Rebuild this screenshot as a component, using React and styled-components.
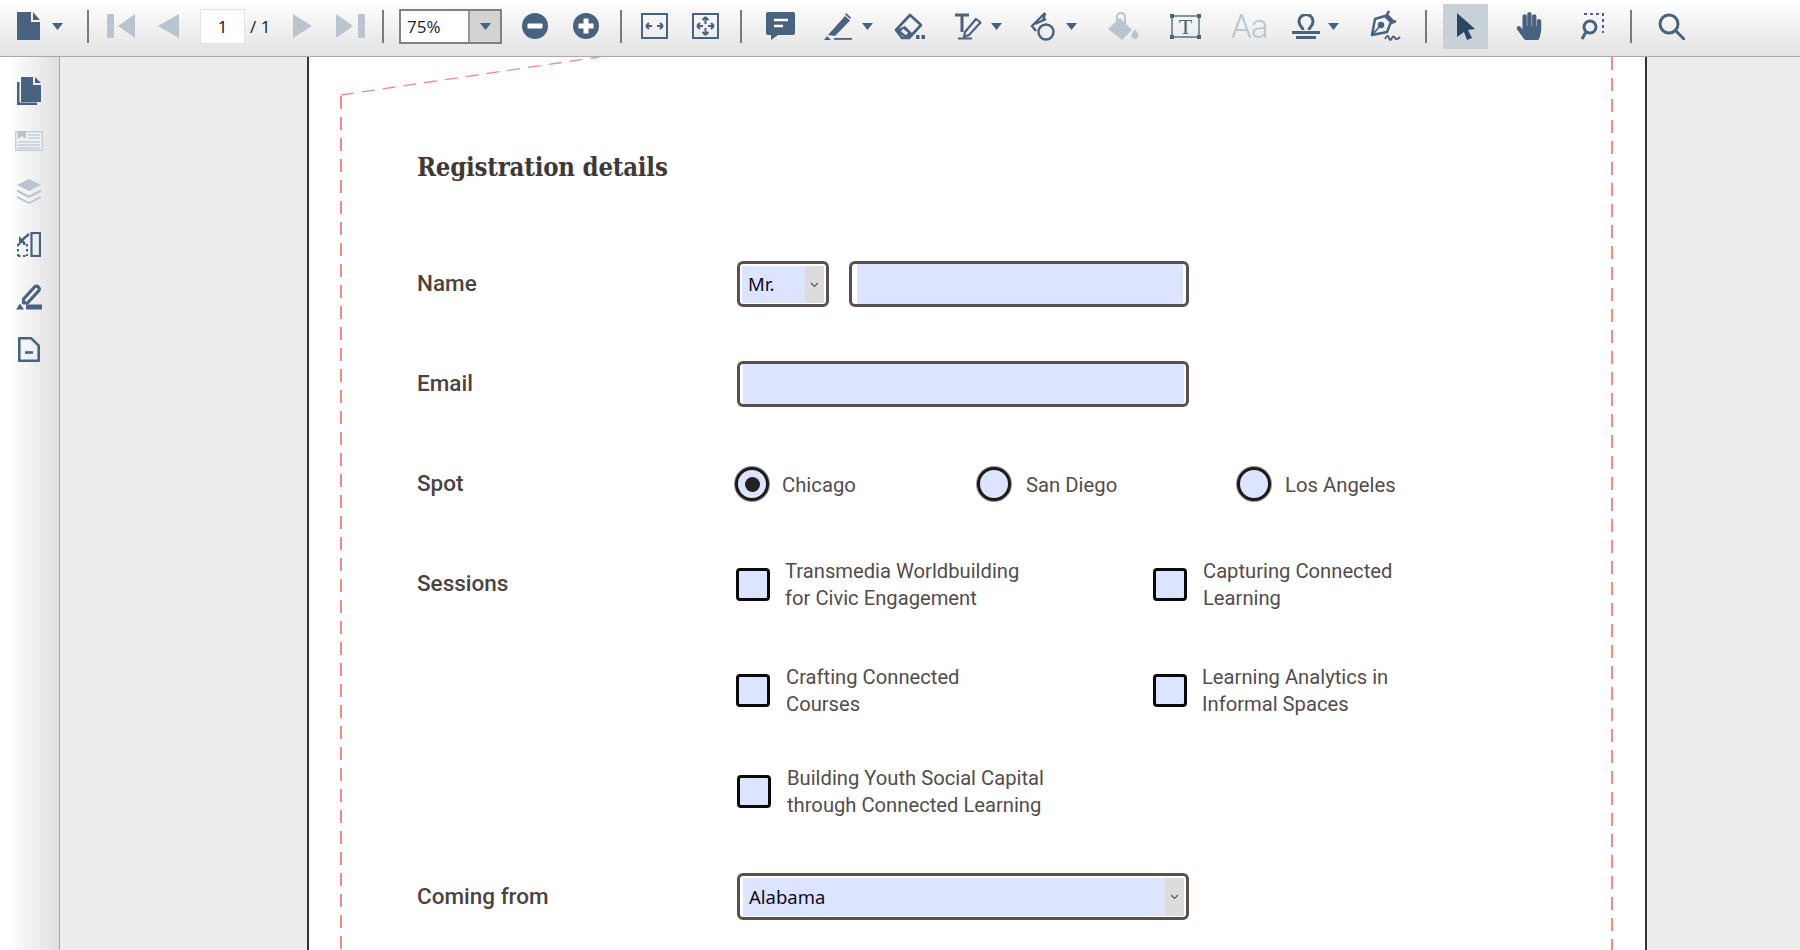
import React from "react";
import styled, { createGlobalStyle } from "styled-components";
import { FaHandPaper } from "react-icons/fa";

const Global = createGlobalStyle`
  html, body { margin: 0; padding: 0; height: 100%; overflow: hidden; background: #ededed; }
  #root { height: 100%; }
  * { box-sizing: border-box; }
`;

const BLUE = "#48627f";
const DIM = "#b9c4ce";
const FILL = "#dce4ff";

const Shell = styled.div`
  display: flex; flex-direction: column; width: 1800px; height: 950px; overflow: hidden;
  font-family: Roboto, sans-serif;
`;
const Toolbar = styled.header`
  height: 57px; flex: none; display: flex; align-items: center; padding-bottom: 4px;
  background: linear-gradient(#ffffff, #e3e3e3);
  border-bottom: 1px solid #a9a9a9;
`;
const Slot = styled.div`
  flex: none; display: flex; align-items: center; justify-content: center;
  margin-left: ${p => p.$gap}px;
  color: ${p => (p.$dim ? DIM : BLUE)};
  svg { display: block; }
`;
const Sep = styled.div`
  flex: none; width: 2px; height: 33px; background: #7b7b7b; margin-left: ${p => p.$gap}px;
`;
const PageInput = styled.div`
  flex: none; width: 45px; height: 35px; margin-left: ${p => p.$gap}px;
  background: #fff; border: 1px solid #e2e2e2;
  display: flex; align-items: center; justify-content: center;
  font: 17px "Open Sans", sans-serif; color: #111;
`;
const PageTotal = styled.span`
  flex: none; width: 21px; margin-left: ${p => p.$gap}px; white-space: nowrap;
  font: 17px "Open Sans", sans-serif; color: #222;
`;
const ZoomSelect = styled.div`
  flex: none; width: 103px; height: 35px; margin-left: ${p => p.$gap}px;
  display: flex; background: #fff; border: 2px solid #808080;
`;
const ZoomValue = styled.div`
  flex: 1; padding-left: 6px; display: flex; align-items: center;
  font: 17px "Open Sans", sans-serif; color: #222;
`;
const ZoomCaret = styled.div`
  width: 32px; background: #d3d3d3; border-left: 2px solid #999;
  display: flex; align-items: center; justify-content: center; color: ${BLUE};
`;
const Active = styled.div`
  flex: none; width: 45px; height: 45px; margin-left: ${p => p.$gap}px;
  background: #c8d1d7; display: flex; align-items: center; justify-content: center;
`;
const FontGlyph = styled.span`
  flex: none; margin-left: ${p => p.$gap}px; width: 34px; white-space: nowrap;
  font: 300 33px Roboto, sans-serif; color: #b9c4ce; letter-spacing: -1px;
`;

const Body = styled.div`
  flex: 1; display: flex; min-height: 0;
`;
const Sidebar = styled.aside`
  width: 60px; flex: none; display: flex; flex-direction: column; align-items: center;
  padding: 27px 0 0 0;
  background: linear-gradient(90deg, #ffffff 15%, #dfdfdf);
  border-right: 1px solid #a6a6a6;
  color: ${BLUE};
`;
const SideIcon = styled.div`
  height: ${p => p.$h}px; margin-top: ${p => p.$gap}px; margin-left: -1px;
  color: ${p => (p.$dim ? DIM : BLUE)};
  svg { display: block; }
`;
const Viewer = styled.main`
  flex: 1; background: #ededed; display: flex; padding-left: 247px; overflow: hidden;
`;
const Page = styled.section`
  position: relative; width: 1340px; height: 100%; flex: none; background: #fff;
  border-left: 2px solid #333; border-right: 2px solid #333;
  padding: 94px 0 0 108px; color: #4b4343;
`;
const CutLines = styled.svg`
  position: absolute; left: 0; top: 0; width: 100%; height: 100%; pointer-events: none;
`;
const Title = styled.h1`
  margin: 0; font: 700 25.5px/32px "DejaVu Serif Condensed", "DejaVu Serif", serif; color: #3f3838;
  letter-spacing: -0.2px;
`;
const Row = styled.div`
  display: flex; align-items: ${p => p.$top ? "flex-start" : "center"}; margin-top: ${p => p.$mt}px;
`;
const Label = styled.div`
  width: 320px; flex: none; margin-bottom: 2px;
  font: 500 22.5px/${p => (p.$lh || 46) - 2}px Roboto, sans-serif; color: #4b4343;
`;
const Field = styled.div`
  width: ${p => p.$w}px; height: 46px; flex: none; margin-left: ${p => p.$ml || 0}px;
  background: #fff; border: 3px solid #5a4f4d; border-radius: 6px;
  padding: 0 ${p => p.$pr}px 0 ${p => p.$pl}px;
  display: flex;
`;
const FieldFill = styled.div`
  flex: 1; background: ${FILL};
`;
const SelectBox = styled.div`
  width: ${p => p.$w}px; height: ${p => p.$h}px; flex: none;
  background: #fff; border: 3px solid #5a4f4d; border-radius: 6px;
  padding: 2px 2px 1px ${p => p.$pl}px; display: flex;
`;
const SelectFill = styled.div`
  flex: 1; background: ${FILL}; display: flex; align-items: center; justify-content: space-between;
  font: 18.5px "Noto Sans", sans-serif; color: #0b0b1a; padding-left: 6px;
`;
const SelectText = styled.span` margin-top: -2px; `;
const SelectArrow = styled.div`
  width: 19px; height: 100%; background: #dcdcdc; display: flex; align-items: center; justify-content: center;
  color: #555;
`;
const Radios = styled.div` display: flex; margin-left: -2px; `;
const RadioItem = styled.label`
  display: flex; align-items: center; width: ${p => p.$w}px; height: 34px;
  font: 400 20.3px Roboto, sans-serif; color: #544c4c;
`;
const RadioText = styled.span` padding-top: 2px; `;
const RadioMark = styled.span`
  width: 34px; height: 34px; flex: none; margin-right: ${p => p.$mr}px; border-radius: 50%;
  background: ${FILL}; border: 3.5px solid #1d1a1a; box-shadow: 0 0 0 1px #9a9494;
  display: flex; align-items: center; justify-content: center;
  &::after { content: ""; display: ${p => (p.$on ? "block" : "none")};
    width: 15px; height: 15px; border-radius: 50%; background: #222; }
`;
const Sessions = styled.div`
  display: flex; flex-direction: column; margin-left: -1px;
`;
const SessionRow = styled.div`
  display: flex; margin-top: ${p => p.$mt || 0}px;
`;
const Session = styled.label`
  display: flex; align-items: center; width: 417px; height: 54px; padding-left: ${p => p.$pad || 0}px;
  font: 400 20.2px/27px Roboto, sans-serif; color: #544c4c;
`;
const SessionText = styled.span` padding-top: 2px; `;
const Check = styled.span`
  width: 34px; height: 33px; flex: none; margin-right: ${p => p.$mr}px;
  background: ${FILL}; border: 3.5px solid #0a0a0a; border-radius: 4px;
`;

const Caret = () => <svg width="11" height="7" viewBox="0 0 11 7"><path d="M0 0h11L5.5 7z" fill="currentColor" /></svg>;
const Chevron = () => <svg width="9" height="6" viewBox="0 0 9 6"><path d="M1 1l3.5 3.5L8 1" fill="none" stroke="currentColor" strokeWidth="1.2" /></svg>;

const i = { FileIcon: <svg width="23" height="28" viewBox="0 0 23 28" fill="currentColor"><path d="M0 0h14v10h9v18H0z" /><path d="M16 0l7 8h-7z" /></svg>,
  First: <svg width="28" height="24" viewBox="0 0 28 24" fill="currentColor"><rect width="7" height="24" /><path d="M28 0v24L11 12z" /></svg>,
  Prev: <svg width="21" height="24" viewBox="0 0 21 24" fill="currentColor"><path d="M21 0v24L0 12z" /></svg>,
  Next: <svg width="19" height="24" viewBox="0 0 19 24" fill="currentColor"><path d="M0 0v24l19-12z" /></svg>,
  Last: <svg width="29" height="24" viewBox="0 0 29 24" fill="currentColor"><path d="M0 0v24l17-12z" /><rect x="22" width="7" height="24" /></svg>,
  Minus: <svg width="26" height="26" viewBox="0 0 26 26"><circle cx="13" cy="13" r="13" fill="currentColor" /><rect x="5.500" y="10.500" width="15" height="5" rx="1" fill="#fff" /></svg>,
  Plus: <svg width="26" height="26" viewBox="0 0 26 26"><circle cx="13" cy="13" r="13" fill="currentColor" /><path d="M10.500 5.500h5v5h5v5h-5v5h-5v-5h-5v-5h5z" fill="#fff" /></svg>,
  FitW: <svg width="27" height="26" viewBox="0 0 27 26" fill="none" stroke="currentColor" strokeWidth="2"><rect x="1" y="1" width="25" height="24" /><path d="M5 13h6M5 13l3-3M5 13l3 3M22 13h-6M22 13l-3-3M22 13l-3 3" /></svg>,
  FitP: <svg width="27" height="26" viewBox="0 0 27 26" fill="none" stroke="currentColor" strokeWidth="2"><rect x="1" y="1" width="25" height="24" /><path d="M13.500 4v7M13.500 15v7M13.500 4L10.500 7M13.500 4l3 3M13.500 22l-3-3M13.500 22l3-3M5 13h6M16 13h6M5 13l3-3M5 13l3 3M22 13l-3-3M22 13l-3 3" /></svg>,
  Comment: <svg width="29" height="28" viewBox="0 0 29 28"><path d="M2 0h25a2 2 0 0 1 2 2v19a2 2 0 0 1-2 2H12l-7 5v-5H2a2 2 0 0 1-2-2V2a2 2 0 0 1 2-2z" fill="currentColor" /><path d="M8 8h14M8 14h9" stroke="#fff" strokeWidth="2.4" /></svg>,
  Highlight: <svg width="28" height="27" viewBox="0 0 28 27" fill="currentColor"><path d="M21 3l5 4.500L11 23l-7-1z" /><path d="M22 0l5 4.500-1 1.500-5-4.500z" /><path d="M0 27l3-4 4 4z" /><rect x="10" y="25" width="18" height="1.800" /></svg>,
  Eraser: <svg width="32" height="27" viewBox="0 0 32 27" fill="none" stroke="currentColor" strokeWidth="2.600" strokeLinejoin="round"><path d="M16 2L27 12 15 25H8L2 17z" /><path d="M2 17l9 8h4l4-4-8-8z" fill="currentColor" stroke="none" /><path d="M8 17l5 4" stroke="#eee" strokeWidth="3.500" /><rect x="22" y="22" width="3.500" height="4" fill="currentColor" stroke="none" /><rect x="27.500" y="22" width="3.500" height="4" fill="currentColor" stroke="none" /></svg>,
  FreeText: <svg width="28" height="27" viewBox="0 0 28 27" fill="none" stroke="currentColor"><path d="M1 2h14M8 2v17" strokeWidth="3" /><path d="M22 6l4.500 3.500L15 22l-5 2 1-5z" strokeWidth="2.200" strokeLinejoin="round" /><path d="M4 25.500h14" strokeWidth="2" /></svg>,
  Shape: <svg width="26" height="31" viewBox="0 0 26 31" fill="none" stroke="currentColor" strokeWidth="2.400"><path d="M15 2L2 15l4 5" /><path d="M15 2l-2 8" /><path d="M5 13l11-5" /><circle cx="16" cy="21" r="7.500" /></svg>,
  Fill: <svg width="32" height="28" viewBox="0 0 32 28" fill="currentColor"><path d="M13 6l12 12-10 10L1 17z" /><path d="M10 9V5a4 4 0 0 1 8 0v8" fill="none" stroke="currentColor" strokeWidth="2" /><path d="M28 17c2 3 3.500 4.500 3.500 6.500a3.500 3.500 0 0 1-7 0c0-2 1.500-3.500 3.500-6.500z" /></svg>,
  TextBox: <svg width="31" height="25" viewBox="0 0 31 25"><rect x="2" y="2" width="27" height="21" fill="none" stroke="currentColor" strokeWidth="1.300" /><g fill="currentColor"><rect width="4" height="4" /><rect x="27" width="4" height="4" /><rect y="21" width="4" height="4" /><rect x="27" y="21" width="4" height="4" /></g><text x="15.500" y="20" textAnchor="middle" fontFamily="'Liberation Serif', serif" fontSize="22" fill="currentColor">T</text></svg>,
  Stamp: <svg width="30" height="25" viewBox="0 0 30 25" fill="none" stroke="currentColor" strokeWidth="3"><path d="M12 16c0-3-4-4-4-8.500a7 7 0 0 1 14 0c0 4.500-4 5.500-4 8.500" /><path d="M1 18.500h28" /><path d="M5 23.500h20" /></svg>,
  Sign: <svg width="33" height="32" viewBox="0 0 33 32" fill="none" stroke="currentColor" strokeWidth="2.500"><path d="M7 9l10-3 6 6-4 10-15 3z" strokeLinejoin="round" /><path d="M18 6l3-5M23 13l5-2M18 4l7 7" /><path d="M5 24l7-8" strokeWidth="1.600" /><circle cx="13" cy="15" r="2" fill="currentColor" /><path d="M17 29c2-4 3-4 4-1s2 2 3 0 2-2 3 0 3 1 5-1" strokeWidth="2" /></svg>,
  Cursor: <svg width="20" height="27" viewBox="0 0 20 27"><path d="M1 0l18 16-7 1 4 8-5 2-3-8-7 5z" fill="#2b4662" /></svg>,
  ZoomArea: <svg width="24" height="27" viewBox="0 0 24 27" fill="none" stroke="currentColor"><path d="M4 1h19v19" strokeWidth="2" strokeDasharray="3 3" /><circle cx="10" cy="14" r="6" strokeWidth="3" /><path d="M6 19l-4 7" strokeWidth="3" /></svg>,
  Search: <svg width="27" height="27" viewBox="0 0 27 27" fill="none" stroke="currentColor" strokeWidth="3"><circle cx="11" cy="11" r="9" /><path d="M17.500 17.500L26 26" strokeLinecap="round" /></svg>,
  Pages: <svg width="24" height="28" viewBox="0 0 24 28" fill="currentColor"><path d="M4 0h12v8h8v17H4z" /><path d="M18 0l6 6h-6z" /><path d="M0 5h2.500v20.500H20V28H0z" /></svg>,
  Cards: <svg width="28" height="20" viewBox="0 0 28 20"><rect x="0.700" y="0.700" width="26.600" height="18.600" fill="#eef0f3" stroke="#c5ced7" strokeWidth="1.400" /><path d="M3 0h8v8l-4-3-4 3z" fill="#b9c4ce" /><path d="M13 4h12M13 7h12M3 11h22M3 14h22M3 17h22" stroke="#c5ced7" strokeWidth="1.400" /></svg>,
  Layers: <svg width="24" height="25" viewBox="0 0 24 25" fill="currentColor"><path d="M12 0l12 6-12 6L0 6z" /><path d="M0 10.500l12 6 12-6v2.500l-12 6-12-6z" /><path d="M0 17l12 6 12-6v2l-12 6-12-6z" /></svg>,
  PanelIcon: <svg width="24" height="25" viewBox="0 0 24 25" fill="none" stroke="currentColor"><rect x="14.500" y="1" width="8.500" height="23" strokeWidth="2.200" /><path d="M1 12h9M1 12v12M1 24h10M10 12v12" strokeWidth="2" strokeDasharray="2.500 2.500" /><path d="M12 2L4 9" strokeWidth="2.400" /><path d="M2 4v7h7z" fill="currentColor" stroke="none" /></svg>,
  Pen: <svg width="26" height="26" viewBox="0 0 26 26" fill="none" stroke="currentColor"><path d="M19 2.500a3 3 0 0 1 4 4L11.500 19H7.500v-4z" strokeWidth="3.200" strokeLinejoin="round" /><path d="M0 25.500l4-6 4 6z" fill="currentColor" stroke="none" /><path d="M10 20.500h16v5H10z" fill="currentColor" stroke="none" /></svg>,
  Doc: <svg width="22" height="25" viewBox="0 0 22 25" fill="none" stroke="currentColor" strokeWidth="2.600"><path d="M1.300 1.300h12l7.400 7.400v15H1.300z" strokeLinejoin="round" /><path d="M7 15.500h8" /></svg>,
};

function Cut() {
  return (
    <CutLines>
      <path d="M32 38L290 0" fill="none" stroke="#f58a84" strokeWidth="1.300" strokeDasharray="13 8" />
      <path d="M32 39V893" fill="none" stroke="#f58a84" strokeWidth="2" strokeDasharray="13 8" />
      <path d="M1303 0V893" fill="none" stroke="#f58a84" strokeWidth="2" strokeDasharray="13 8" />
    </CutLines>
  );
}

export default function App() {
  return (
    <Shell>
      <Global />
      <Toolbar>
        <Slot $gap={17}>{i.FileIcon}</Slot>
        <Slot $gap={12}><Caret /></Slot>
        <Sep $gap={24} />
        <Slot $gap={18} $dim>{i.First}</Slot>
        <Slot $gap={23} $dim>{i.Prev}</Slot>
        <PageInput $gap={21}>1</PageInput>
        <PageTotal $gap={5}>/ 1</PageTotal>
        <Slot $gap={22} $dim>{i.Next}</Slot>
        <Slot $gap={24} $dim>{i.Last}</Slot>
        <Sep $gap={17} />
        <ZoomSelect $gap={15}>
          <ZoomValue>75%</ZoomValue>
          <ZoomCaret><Caret /></ZoomCaret>
        </ZoomSelect>
        <Slot $gap={20}>{i.Minus}</Slot>
        <Slot $gap={25}>{i.Plus}</Slot>
        <Sep $gap={21} />
        <Slot $gap={19}>{i.FitW}</Slot>
        <Slot $gap={24}>{i.FitP}</Slot>
        <Sep $gap={21} />
        <Slot $gap={24}>{i.Comment}</Slot>
        <Slot $gap={29}>{i.Highlight}</Slot>
        <Slot $gap={10}><Caret /></Slot>
        <Slot $gap={21}>{i.Eraser}</Slot>
        <Slot $gap={28}>{i.FreeText}</Slot>
        <Slot $gap={9}><Caret /></Slot>
        <Slot $gap={28}>{i.Shape}</Slot>
        <Slot $gap={10}><Caret /></Slot>
        <Slot $gap={30} $dim>{i.Fill}</Slot>
        <Slot $gap={31}>{i.TextBox}</Slot>
        <FontGlyph $gap={30}>Aa</FontGlyph>
        <Slot $gap={26}>{i.Stamp}</Slot>
        <Slot $gap={7}><Caret /></Slot>
        <Slot $gap={29}>{i.Sign}</Slot>
        <Sep $gap={24} />
        <Active $gap={16}>{i.Cursor}</Active>
        <Slot $gap={27}><FaHandPaper size={28} /></Slot>
        <Slot $gap={37}>{i.ZoomArea}</Slot>
        <Sep $gap={26} />
        <Slot $gap={26}>{i.Search}</Slot>
      </Toolbar>
      <Body>
        <Sidebar>
          <SideIcon $h={28} $gap={-7}>{i.Pages}</SideIcon>
          <SideIcon $h={20} $gap={26} $dim>{i.Cards}</SideIcon>
          <SideIcon $h={25} $gap={28} $dim>{i.Layers}</SideIcon>
          <SideIcon $h={25} $gap={28}>{i.PanelIcon}</SideIcon>
          <SideIcon $h={26} $gap={27}>{i.Pen}</SideIcon>
          <SideIcon $h={25} $gap={27}>{i.Doc}</SideIcon>
        </Sidebar>
        <Viewer>
          <Page>
            <Cut />
            <Title>Registration details</Title>
            <Row $mt={78}>
              <Label>Name</Label>
              <SelectBox $w={92} $h={46} $pl={2}>
                <SelectFill><SelectText>Mr.</SelectText><SelectArrow><Chevron /></SelectArrow></SelectFill>
              </SelectBox>
              <Field $w={340} $ml={20} $pl={5} $pr={3}><FieldFill /></Field>
            </Row>
            <Row $mt={54}>
              <Label>Email</Label>
              <Field $w={452} $pl={3} $pr={2}><FieldFill /></Field>
            </Row>
            <Row $mt={60}>
              <Label $lh={34}>Spot</Label>
              <Radios>
                <RadioItem $w={242}><RadioMark $on $mr={13} /><RadioText>Chicago</RadioText></RadioItem>
                <RadioItem $w={260}><RadioMark $mr={15} /><RadioText>San Diego</RadioText></RadioItem>
                <RadioItem $w={200}><RadioMark $mr={14} /><RadioText>Los Angeles</RadioText></RadioItem>
              </Radios>
            </Row>
            <Row $mt={56} $top>
              <Label $lh={54}>Sessions</Label>
              <Sessions>
                <SessionRow>
                  <Session><Check $mr={15} /><SessionText>Transmedia Worldbuilding<br />for Civic Engagement</SessionText></Session>
                  <Session><Check $mr={16} /><SessionText>Capturing Connected<br />Learning</SessionText></Session>
                </SessionRow>
                <SessionRow $mt={52}>
                  <Session><Check $mr={16} /><SessionText>Crafting Connected<br />Courses</SessionText></Session>
                  <Session><Check $mr={15} /><SessionText>Learning Analytics in<br />Informal Spaces</SessionText></Session>
                </SessionRow>
                <SessionRow $mt={47}>
                  <Session $pad={1}><Check $mr={16} /><SessionText>Building Youth Social Capital<br />through Connected Learning</SessionText></Session>
                </SessionRow>
              </Sessions>
            </Row>
            <Row $mt={55}>
              <Label>Coming from</Label>
              <SelectBox $w={452} $h={47} $pl={3}>
                <SelectFill><SelectText>Alabama</SelectText><SelectArrow><Chevron /></SelectArrow></SelectFill>
              </SelectBox>
            </Row>
          </Page>
        </Viewer>
      </Body>
    </Shell>
  );
}
